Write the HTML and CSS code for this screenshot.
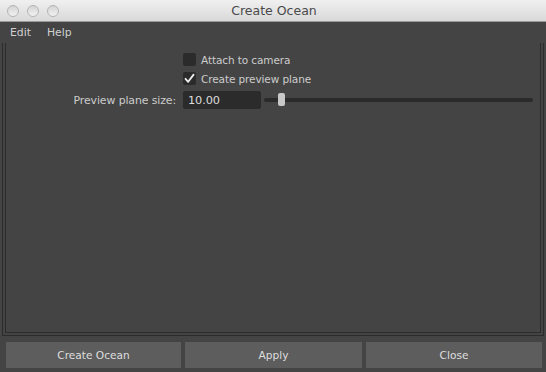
FILE: index.html
```html
<html>
	<head>
		<link rel="stylesheet" href="styles.css">
	</head>
	<body>
		<div class="window">
			<div class="titlebar">
				<div class="lights">
					<span class="light"></span>
					<span class="light"></span>
					<span class="light"></span>
				</div>
				<div class="title">Create Ocean</div>
			</div>
			<div class="menubar">
				<span class="menu">Edit</span>
				<span class="menu">Help</span>
			</div>
			<div class="frame">
				<div class="frame-inner">
					<div class="form">
						<div class="row">
							<div class="label"></div>
							<label class="check"><span class="box"></span>Attach to camera</label>
						</div>
						<div class="row">
							<div class="label"></div>
							<label class="check">
								<span class="box">
									<svg width="13" height="13" viewBox="0 0 13 13"><path d="M2.5 6.8 L5.2 9.8 L10.6 2.6" fill="none" stroke="#eeeeee" stroke-width="1.8" stroke-linecap="round" stroke-linejoin="round"/></svg>
								</span>Create preview plane
							</label>
						</div>
						<div class="row">
							<div class="label">Preview plane size:</div>
							<div class="field-group">
								<div class="field">10.00</div>
								<div class="slider">
									<div class="track"></div>
									<div class="handle"></div>
								</div>
							</div>
						</div>
					</div>
				</div>
			</div>
			<div class="buttons">
				<div class="button">Create Ocean</div>
				<div class="button">Apply</div>
				<div class="button">Close</div>
			</div>
		</div>
	</body>
</html>
```

FILE: styles.css
```css
body {
	margin: 0px;
	font-family: "DejaVu Sans", "Liberation Sans", sans-serif;
	background-color: #444444;
}
.window {
	width: 546px;
	height: 372px;
	display: flex;
	flex-direction: column;
	background-color: #444444;
	overflow: hidden;
}
.titlebar {
	height: 21px;
	flex: none;
	position: relative;
	display: flex;
	align-items: center;
	justify-content: center;
	background: linear-gradient(#f0f0f0, #d9d9d9);
	border-bottom: 1px solid #9a9a9a;
}
.lights {
	position: absolute;
	left: 7px;
	top: 5px;
	display: flex;
	gap: 8px;
}
.light {
	width: 10px;
	height: 10px;
	border-radius: 50%;
	border: 1px solid #b4b4b4;
	background: linear-gradient(#d4d4d4, #f2f2f2);
}
.title {
	font-size: 12.5px;
	color: #4a4a4a;
	padding-left: 2px;
}
.menubar {
	height: 21px;
	flex: none;
	display: flex;
	align-items: center;
	gap: 16px;
	padding-left: 10px;
	font-size: 10.8px;
	color: #d0d0d0;
}
.frame {
	height: 290px;
	flex: none;
	margin: 0px 2px;
	padding: 0px 2px 2px 2px;
	border: 1px solid #2c2c2c;
	border-top: none;
}
.frame-inner {
	height: 100%;
	box-sizing: border-box;
	border: 1px solid #2c2c2c;
	border-top: none;
}
.form {
	padding: 10px 7px 0px 0px;
	display: flex;
	flex-direction: column;
	gap: 6px;
	font-size: 10.5px;
	letter-spacing: -0.1px;
	color: #cccccc;
}
.row {
	display: flex;
	align-items: center;
}
.label {
	width: 170px;
	flex: none;
	text-align: right;
	padding-right: 7px;
	font-size: 10.9px;
}
.check {
	display: flex;
	align-items: center;
	gap: 5px;
	height: 13px;
}
.box {
	width: 13px;
	height: 13px;
	border-radius: 2px;
	background-color: #2b2b2b;
	display: block;
}
.box svg {
	display: block;
}
.field-group {
	flex: 1;
	display: flex;
	align-items: center;
	gap: 3px;
}
.field {
	width: 73px;
	height: 18px;
	line-height: 19px;
	padding-left: 5px;
	border-radius: 2px;
	background-color: #2b2b2b;
	color: #dddddd;
	font-size: 11.3px;
}
.slider {
	flex: 1;
	height: 14px;
	position: relative;
	display: flex;
	align-items: center;
}
.track {
	width: 100%;
	height: 4px;
	border-radius: 2px;
	background-color: #2a2a2a;
}
.handle {
	position: absolute;
	left: 14px;
	top: 0px;
	width: 7px;
	height: 13px;
	border-radius: 2px;
	background-color: #c8c8c8;
}
.buttons {
	display: grid;
	grid-template-columns: 175px 177px 176px;
	column-gap: 4px;
	padding: 6px 5px 0px 6px;
}
.button {
	height: 26px;
	line-height: 26px;
	text-align: center;
	background-color: #5d5d5d;
	color: #dddddd;
	font-size: 10.6px;
}
```
